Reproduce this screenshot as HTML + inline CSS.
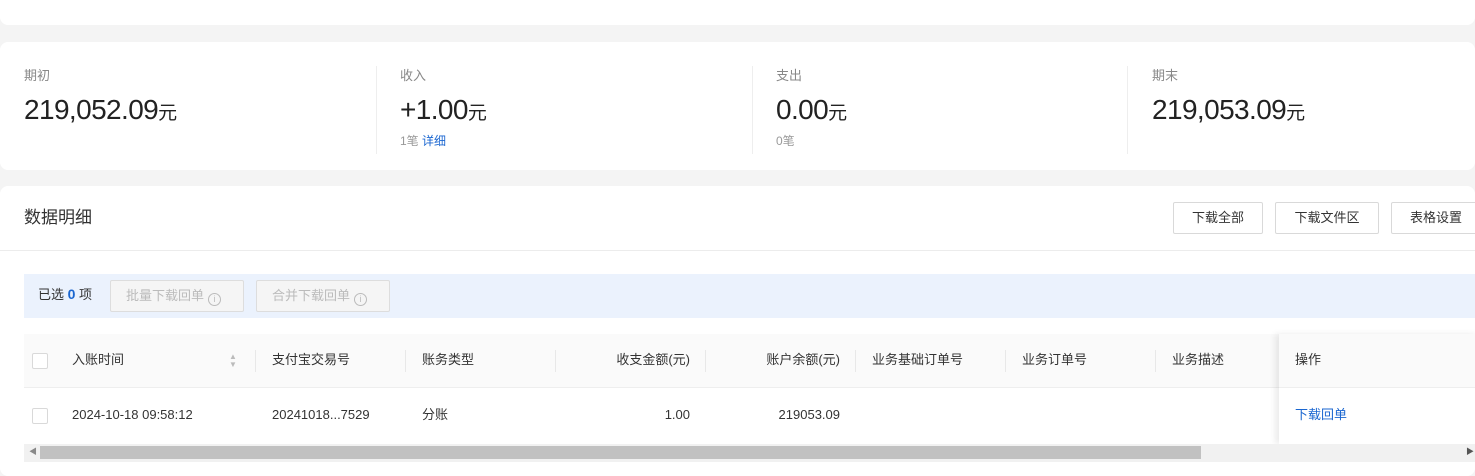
<!DOCTYPE html>
<html><head><meta charset="utf-8"><style>
*{margin:0;padding:0;box-sizing:border-box}
body{width:1475px;height:462px;background:#f4f4f4;font-family:"Liberation Sans","Noto Sans CJK SC",sans-serif;color:#333;position:relative;overflow:hidden;line-height:1.25}
.card{position:absolute;left:0;right:0;background:#fff;border-radius:8px}
.abs{position:absolute;white-space:nowrap}
.lbl{font-size:13px;color:#888}
.big{font-size:28px;color:#222;letter-spacing:-0.6px}
.big span{font-size:19px;letter-spacing:0}
.sub{font-size:12px;color:#999}
.div{position:absolute;top:66px;height:88px;width:1px;background:#eee}
.btn{position:absolute;top:202px;height:32px;border:1px solid #d9d9d9;border-radius:2px;font-size:13px;color:#333;text-align:center;line-height:30px;background:#fff}
.dbtn{position:absolute;top:280px;height:32px;border:1px solid #ddd;background:#f5f5f5;color:#bbb;font-size:13px;line-height:30px;padding-left:15px;border-radius:2px}
.th{font-size:13px;color:#333;top:352px}
.td{font-size:13px;color:#333;top:407px}
.sep{position:absolute;top:350px;height:22px;width:1px;background:#e8e8e8}
.cb{position:absolute;left:32px;width:16px;height:16px;border:1px solid #d9d9d9;border-radius:2px;background:#fff}
.ic{display:inline-block;width:13px;height:13px;border:1px solid #bbb;border-radius:50%;font-size:9px;line-height:11px;text-align:center;vertical-align:-2px;margin-left:4px}
</style></head><body>
<div class="card" style="top:-8px;height:33px"></div>
<div class="card" style="top:42px;height:128px"></div>
<div class="div" style="left:376px"></div><div class="div" style="left:752px"></div><div class="div" style="left:1127px"></div>
<div class="abs lbl" style="left:24px;top:68px">期初</div>
<div class="abs big" style="left:24px;top:92px">219,052.09<span>元</span></div>
<div class="abs lbl" style="left:400px;top:68px">收入</div>
<div class="abs big" style="left:400px;top:92px">+1.00<span>元</span></div>
<div class="abs sub" style="left:400px;top:134px">1笔 <span style="color:#1a66d0">详细</span></div>
<div class="abs lbl" style="left:776px;top:68px">支出</div>
<div class="abs big" style="left:776px;top:92px">0.00<span>元</span></div>
<div class="abs sub" style="left:776px;top:134px">0笔</div>
<div class="abs lbl" style="left:1152px;top:68px">期末</div>
<div class="abs big" style="left:1152px;top:92px">219,053.09<span>元</span></div>

<div class="card" style="top:186px;height:290px"></div>
<div class="abs" style="left:24px;top:207px;font-size:17px;color:#333">数据明细</div>
<div class="btn" style="left:1173px;width:90px">下载全部</div>
<div class="btn" style="left:1275px;width:104px">下载文件区</div>
<div class="btn" style="left:1391px;width:90px">表格设置</div>
<div class="abs" style="left:0;right:0;top:250px;height:1px;background:#ececec"></div>

<div class="abs" style="left:24px;right:0;top:274px;height:44px;background:#ebf2fd"></div>
<div class="abs" style="left:38px;top:286px;font-size:13px;color:#333">已选 <b style="color:#1a66d0;font-size:14px">0</b> 项</div>
<div class="dbtn" style="left:110px;width:134px">批量下载回单<span class="ic">i</span></div>
<div class="dbtn" style="left:256px;width:134px">合并下载回单<span class="ic">i</span></div>

<div class="abs" style="left:24px;right:0;top:334px;height:54px;background:#fafafa;border-bottom:1px solid #eee"></div>
<div class="cb" style="top:353px"></div>
<div class="abs th" style="left:72px">入账时间</div>
<div class="abs" style="left:229px;top:353px;font-size:8px;color:#bbb;line-height:8px">▲<br>▼</div>
<div class="sep" style="left:255px"></div><div class="sep" style="left:405px"></div><div class="sep" style="left:555px"></div><div class="sep" style="left:705px"></div><div class="sep" style="left:855px"></div><div class="sep" style="left:1005px"></div><div class="sep" style="left:1155px"></div>
<div class="abs th" style="left:272px">支付宝交易号</div>
<div class="abs th" style="left:422px">账务类型</div>
<div class="abs th" style="right:785px">收支金额(元)</div>
<div class="abs th" style="right:635px">账户余额(元)</div>
<div class="abs th" style="left:872px">业务基础订单号</div>
<div class="abs th" style="left:1022px">业务订单号</div>
<div class="abs th" style="left:1172px">业务描述</div>
<div class="cb" style="top:408px"></div>
<div class="abs td" style="left:72px">2024-10-18 09:58:12</div>
<div class="abs td" style="left:272px">20241018...7529</div>
<div class="abs td" style="left:422px">分账</div>
<div class="abs td" style="right:785px">1.00</div>
<div class="abs td" style="right:635px">219053.09</div>
<div class="abs" style="left:1279px;top:334px;width:200px;height:110px;box-shadow:-4px 0 6px rgba(0,0,0,0.08)">
  <div style="height:54px;background:#fafafa;border-bottom:1px solid #eee"></div>
</div>
<div class="abs th" style="left:1295px">操作</div>
<div class="abs td" style="left:1295px;color:#1a66d0">下载回单</div>

<div class="abs" style="left:24px;right:0;top:444px;height:18px;background:#f1f1f1"></div>
<div class="abs" style="left:40px;width:1161px;top:446px;height:13px;background:#c1c1c1"></div>
<div class="abs" style="left:29px;top:447px;font-size:8px;color:#888">◀</div>
<div class="abs" style="left:1466px;top:447px;font-size:8px;color:#555">▶</div>
</body></html>
